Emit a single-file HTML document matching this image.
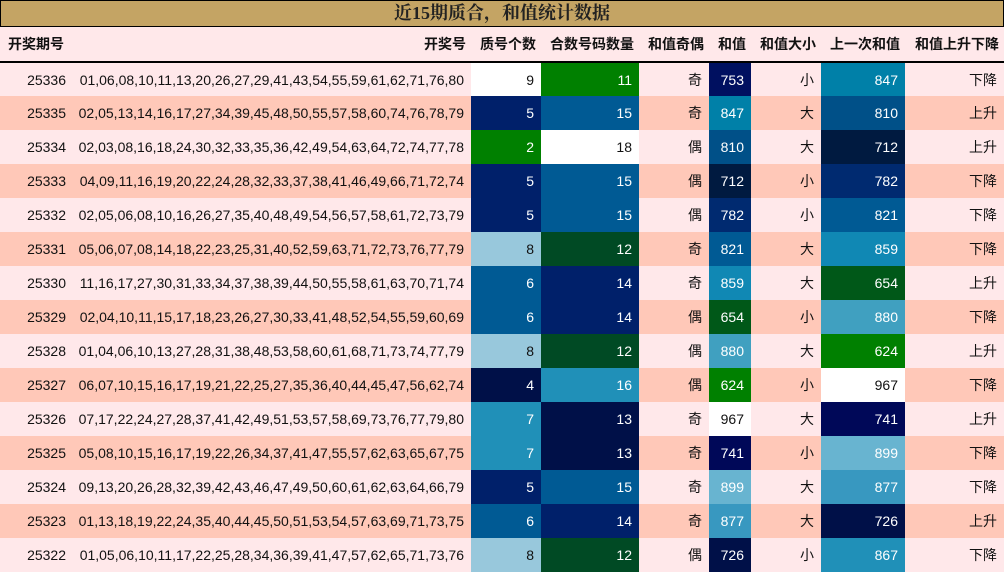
<!DOCTYPE html>
<html><head><meta charset="utf-8"><style>
*{margin:0;padding:0;box-sizing:border-box}
body{width:1004px;height:574px;background:#fff;font-family:"Liberation Sans","Noto Sans CJK SC",sans-serif;font-size:14px;color:#111;overflow:hidden}
.title{height:27px;background:#c4a464;border:1px solid #000;text-align:center;font-family:"Liberation Serif","Noto Serif CJK SC",serif;font-weight:bold;font-size:18px;line-height:25px;color:#222}
table{border-collapse:collapse;table-layout:fixed;width:1004px}
th{height:35px;background:#ffe8ea;font-weight:bold;font-size:14px;text-align:right;padding-right:5px;border-bottom:2px solid #000;white-space:nowrap}
td{height:34px;text-align:right;padding-right:7px;white-space:nowrap}
tr.a td{background:#ffe8ea}tr.b td{background:#ffc8b8}
th:first-child{text-align:left;padding-left:8px}
td.w{color:#fff}
</style></head><body>
<div class="title">近15期质合，和值统计数据</div>
<table>
<colgroup><col style="width:73px"><col style="width:398px"><col style="width:70px"><col style="width:98px"><col style="width:70px"><col style="width:42px"><col style="width:70px"><col style="width:84px"><col style="width:99px"></colgroup>
<tr><th>开奖期号</th><th>开奖号</th><th>质号个数</th><th>合数号码数量</th><th>和值奇偶</th><th>和值</th><th>和值大小</th><th>上一次和值</th><th>和值上升下降</th></tr>
<tr class="a"><td>25336</td><td>01,06,08,10,11,13,20,26,27,29,41,43,54,55,59,61,62,71,76,80</td><td style="background:#fff">9</td><td class="w" style="background:#008000">11</td><td>奇</td><td class="w" style="background:#001060">753</td><td>小</td><td class="w" style="background:#0080a8">847</td><td>下降</td></tr>
<tr class="b"><td>25335</td><td>02,05,13,14,16,17,27,34,39,45,48,50,55,57,58,60,74,76,78,79</td><td class="w" style="background:#00206a">5</td><td class="w" style="background:#005a94">15</td><td>奇</td><td class="w" style="background:#0080a8">847</td><td>大</td><td class="w" style="background:#005088">810</td><td>上升</td></tr>
<tr class="a"><td>25334</td><td>02,03,08,16,18,24,30,32,33,35,36,42,49,54,63,64,72,74,77,78</td><td class="w" style="background:#008000">2</td><td style="background:#fff">18</td><td>偶</td><td class="w" style="background:#005088">810</td><td>大</td><td class="w" style="background:#001a40">712</td><td>上升</td></tr>
<tr class="b"><td>25333</td><td>04,09,11,16,19,20,22,24,28,32,33,37,38,41,46,49,66,71,72,74</td><td class="w" style="background:#00206a">5</td><td class="w" style="background:#005a94">15</td><td>偶</td><td class="w" style="background:#001a40">712</td><td>小</td><td class="w" style="background:#002a70">782</td><td>下降</td></tr>
<tr class="a"><td>25332</td><td>02,05,06,08,10,16,26,27,35,40,48,49,54,56,57,58,61,72,73,79</td><td class="w" style="background:#00206a">5</td><td class="w" style="background:#005a94">15</td><td>偶</td><td class="w" style="background:#002a70">782</td><td>小</td><td class="w" style="background:#005a94">821</td><td>下降</td></tr>
<tr class="b"><td>25331</td><td>05,06,07,08,14,18,22,23,25,31,40,52,59,63,71,72,73,76,77,79</td><td style="background:#98c8dc">8</td><td class="w" style="background:#004a24">12</td><td>奇</td><td class="w" style="background:#005a94">821</td><td>大</td><td class="w" style="background:#1088b4">859</td><td>下降</td></tr>
<tr class="a"><td>25330</td><td>11,16,17,27,30,31,33,34,37,38,39,44,50,55,58,61,63,70,71,74</td><td class="w" style="background:#005a94">6</td><td class="w" style="background:#00206a">14</td><td>奇</td><td class="w" style="background:#1088b4">859</td><td>大</td><td class="w" style="background:#005818">654</td><td>上升</td></tr>
<tr class="b"><td>25329</td><td>02,04,10,11,15,17,18,23,26,27,30,33,41,48,52,54,55,59,60,69</td><td class="w" style="background:#005a94">6</td><td class="w" style="background:#00206a">14</td><td>偶</td><td class="w" style="background:#005818">654</td><td>小</td><td class="w" style="background:#40a0c0">880</td><td>下降</td></tr>
<tr class="a"><td>25328</td><td>01,04,06,10,13,27,28,31,38,48,53,58,60,61,68,71,73,74,77,79</td><td style="background:#98c8dc">8</td><td class="w" style="background:#004a24">12</td><td>偶</td><td class="w" style="background:#40a0c0">880</td><td>大</td><td class="w" style="background:#008000">624</td><td>上升</td></tr>
<tr class="b"><td>25327</td><td>06,07,10,15,16,17,19,21,22,25,27,35,36,40,44,45,47,56,62,74</td><td class="w" style="background:#001048">4</td><td class="w" style="background:#2090b8">16</td><td>偶</td><td class="w" style="background:#008000">624</td><td>小</td><td style="background:#fff">967</td><td>下降</td></tr>
<tr class="a"><td>25326</td><td>07,17,22,24,27,28,37,41,42,49,51,53,57,58,69,73,76,77,79,80</td><td class="w" style="background:#2090b8">7</td><td class="w" style="background:#001048">13</td><td>奇</td><td style="background:#fff">967</td><td>大</td><td class="w" style="background:#000858">741</td><td>上升</td></tr>
<tr class="b"><td>25325</td><td>05,08,10,15,16,17,19,22,26,34,37,41,47,55,57,62,63,65,67,75</td><td class="w" style="background:#2090b8">7</td><td class="w" style="background:#001048">13</td><td>奇</td><td class="w" style="background:#000858">741</td><td>小</td><td class="w" style="background:#68b4d0">899</td><td>下降</td></tr>
<tr class="a"><td>25324</td><td>09,13,20,26,28,32,39,42,43,46,47,49,50,60,61,62,63,64,66,79</td><td class="w" style="background:#00206a">5</td><td class="w" style="background:#005a94">15</td><td>奇</td><td class="w" style="background:#68b4d0">899</td><td>大</td><td class="w" style="background:#3898c0">877</td><td>下降</td></tr>
<tr class="b"><td>25323</td><td>01,13,18,19,22,24,35,40,44,45,50,51,53,54,57,63,69,71,73,75</td><td class="w" style="background:#005a94">6</td><td class="w" style="background:#00206a">14</td><td>奇</td><td class="w" style="background:#3898c0">877</td><td>大</td><td class="w" style="background:#001048">726</td><td>上升</td></tr>
<tr class="a"><td>25322</td><td>01,05,06,10,11,17,22,25,28,34,36,39,41,47,57,62,65,71,73,76</td><td style="background:#98c8dc">8</td><td class="w" style="background:#004a24">12</td><td>偶</td><td class="w" style="background:#001048">726</td><td>小</td><td class="w" style="background:#2090b8">867</td><td>下降</td></tr>
</table>
</body></html>
